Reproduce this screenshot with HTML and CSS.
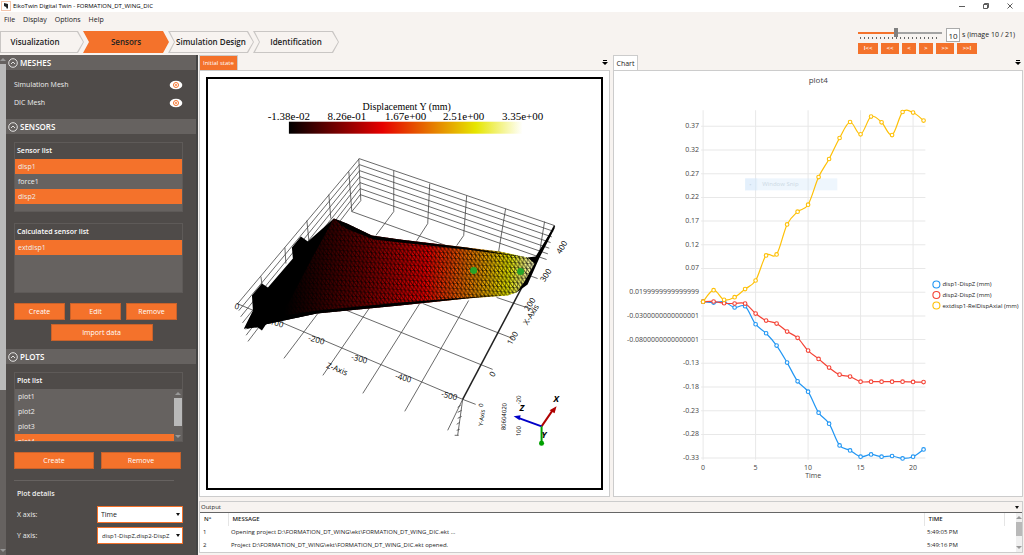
FILE: index.html
```html
<!doctype html>
<html lang="en">
<head>
    <meta charset="utf-8" />
    <title>EikoTwin Digital Twin - FORMATION_DT_WING_DIC</title>
    <link rel="stylesheet" href="styles.css">
</head>
<body>
    <header class="titlebar">
        <svg class="logo" viewBox="0 0 10 10"><rect x=".5" y=".5" width="9" height="9" fill="#fff" stroke="#f3c4ab"/><path d="M3 2l4 1v4l-1 1-1-2-2-1z" fill="#222"/></svg>
        <span class="title">EikoTwin Digital Twin - FORMATION_DT_WING_DIC</span>
        <div class="window-buttons">
            <button aria-label="Minimize"><svg viewBox="0 0 8 8"><path d="M1 4.5h6"/></svg></button>
            <button aria-label="Restore"><svg viewBox="0 0 8 8"><path d="M1.5 2.5h4v4h-4zM2.5 2.5v-1h4v4h-1"/></svg></button>
            <button aria-label="Close"><svg viewBox="0 0 8 8"><path d="M1.500 1.500l5 5M6.500 1.500l-5 5"/></svg></button>
        </div>
    </header>

    <div class="toolbar">
        <div class="toolbar-left">
            <nav class="menu">
                <a href="#">File</a>
                <a href="#">Display</a>
                <a href="#">Options</a>
                <a href="#">Help</a>
            </nav>
            <nav class="steps">
                <a href="#" class="step first"><span>Visualization</span></a>
                <a href="#" class="step active"><span>Sensors</span></a>
                <a href="#" class="step"><span>Simulation Design</span></a>
                <a href="#" class="step"><span>Identification</span></a>
            </nav>
        </div>
        <div class="player">
            <div class="player-top">
                <div class="slider">
                    <input type="range" min="1" max="21" value="10" aria-label="Image">
                    <div class="ticks"></div>
                </div>
                <input class="frame" id="frame" type="text" value="10">
                <label for="frame">s (image 10 / 21)</label>
            </div>
            <div class="player-buttons">
                <button class="wide">I&lt;&lt;</button>
                <button class="mid">&lt;&lt;</button>
                <button>&lt;</button>
                <button>&gt;</button>
                <button class="mid">&gt;&gt;</button>
                <button class="wide">&gt;&gt;I</button>
            </div>
        </div>
    </div>

    <main>
        <aside class="sidebar">
            <div class="scrollbar"><i class="up"></i><b></b><i class="down"></i></div>
            <div class="sections">
                <button class="section-head"><svg viewBox="0 0 10 10"><circle cx="5" cy="5" r="4.300"/><path d="M3 6l2-2 2 2"/></svg>MESHES</button>
                <div class="meshes">
                    <div class="mesh-row">Simulation Mesh
                        <button aria-label="Show simulation mesh"><svg viewBox="0 0 14 10"><ellipse cx="7" cy="5" rx="6.300" ry="4.300" fill="#fff"/><circle cx="7" cy="5" r="2.500" fill="#fff" stroke="#f4722b"/><circle cx="7" cy="5" r=".9" fill="#f4722b"/></svg></button>
                    </div>
                    <div class="mesh-row">DIC Mesh
                        <button aria-label="Show DIC mesh"><svg viewBox="0 0 14 10"><ellipse cx="7" cy="5" rx="6.300" ry="4.300" fill="#fff"/><circle cx="7" cy="5" r="2.500" fill="#fff" stroke="#f4722b"/><circle cx="7" cy="5" r=".9" fill="#f4722b"/></svg></button>
                    </div>
                </div>

                <button class="section-head"><svg viewBox="0 0 10 10"><circle cx="5" cy="5" r="4.300"/><path d="M3 6l2-2 2 2"/></svg>SENSORS</button>
                <div class="section-body">
                    <div class="list">
                        <h3>Sensor list</h3>
                        <ul>
                            <li class="selected">disp1</li>
                            <li>force1</li>
                            <li class="selected">disp2</li>
                        </ul>
                    </div>
                    <div class="list">
                        <h3>Calculated sensor list</h3>
                        <ul>
                            <li class="selected">extdisp1</li>
                        </ul>
                    </div>
                    <div class="buttons three">
                        <button>Create</button>
                        <button>Edit</button>
                        <button>Remove</button>
                    </div>
                    <div class="buttons import">
                        <button>Import data</button>
                    </div>
                </div>

                <button class="section-head"><svg viewBox="0 0 10 10"><circle cx="5" cy="5" r="4.300"/><path d="M3 6l2-2 2 2"/></svg>PLOTS</button>
                <div class="section-body">
                    <div class="list">
                        <h3>Plot list</h3>
                        <div class="list-scroll">
                            <ul>
                                <li>plot1</li>
                                <li>plot2</li>
                                <li>plot3</li>
                                <li class="selected">plot4</li>
                            </ul>
                            <div class="scrollbar"><i class="up"></i><b></b><i class="down"></i></div>
                        </div>
                    </div>
                    <div class="buttons two">
                        <button>Create</button>
                        <button>Remove</button>
                    </div>
                    <hr>
                    <h3 class="details">Plot details</h3>
                    <div class="field">
                        <label for="xaxis">X axis:</label>
                        <div class="select"><select id="xaxis"><option>Time</option></select></div>
                    </div>
                    <div class="field">
                        <label for="yaxis">Y axis:</label>
                        <div class="select"><select id="yaxis" class="multi"><option>disp1-DispZ,disp2-DispZ</option></select></div>
                    </div>
                </div>
                <button class="section-head" aria-label="Next section"><svg viewBox="0 0 10 10"><circle cx="5" cy="5" r="4.300"/></svg></button>
            </div>
        </aside>

        <div class="content">
            <div class="panels">
                <section class="panel">
                    <div class="tabs"><button class="tab active">Initial state</button><button class="more" aria-label="Tabs"><svg viewBox="0 0 6 6"><path d="M1 0h4v1H1zM0 2h6L3 5z"/></svg></button></div>
                    <div class="panel-body view">
                        <svg class="scene" viewBox="208 79 393 408">
                            <defs>
                                <linearGradient id="heat">
                                    <stop offset="0" stop-color="#000"/>
                                    <stop offset=".4" stop-color="#e60000"/>
                                    <stop offset=".8" stop-color="#e6e600"/>
                                    <stop offset="1" stop-color="#fff"/>
                                </linearGradient>
                                <linearGradient id="wing" gradientUnits="userSpaceOnUse" x1="290" y1="260" x2="538" y2="285">
                                    <stop offset="0" stop-color="#000"/>
                                    <stop offset=".3" stop-color="#6a0000"/>
                                    <stop offset=".55" stop-color="#e60000"/>
                                    <stop offset=".72" stop-color="#e67300"/>
                                    <stop offset=".88" stop-color="#e6e600"/>
                                    <stop offset="1" stop-color="#fffff0"/>
                                </linearGradient>
                                <pattern id="mesh" width="4" height="5" patternUnits="userSpaceOnUse" patternTransform="rotate(4)">
                                    <path d="M0 0H4M0 0V5M0 0L4 5" stroke="#000" stroke-width=".9" fill="none"/>
                                </pattern>
                            </defs>
                            <g id="grid" class="grid"></g>
                            <path fill="url(#wing)" d="M334 218L347 223L372 235L400 239L467 247L500 251L528 257L538 257L525 283L517 292L508 295L467 298L400 305L317 313L265 324L262 300Z"/>
                            <path fill="url(#mesh)" d="M334 218L347 223L372 235L400 239L467 247L500 251L528 257L538 257L525 283L517 292L508 295L467 298L400 305L317 313L265 324L262 300Z"/>
                            <path d="M334 218L308 241L301 236L292 247L293 258L268 287L262 283L252 295L253 310L244 328L258 327L262 330L266 324L290 300L312 258Z"/>
                            <path d="M334 218L347 223L372 235L400 239L467 247L528 257L467 249L400 242L374 239L346 228ZM245 329L265 318L317 310L400 302L467 297L508 294L467 298L400 305L317 313L265 324Z"/>
                            <path d="M555 225L536 256L528 257L535 263L525 281L517 292L528 284L540 257L555 228Z"/>
                            <circle cx="474" cy="270" r="3.500" fill="#28a428"/>
                            <circle cx="521" cy="271" r="3.500" fill="#28a428"/>
                            <g class="axis-labels">
                                <text x="234" y="308" transform="rotate(15 234 308)">0</text>
                                <text x="267" y="323" transform="rotate(15 267 323)">-100</text>
                                <text x="308" y="340" transform="rotate(15 308 340)">-200</text>
                                <text x="351" y="359" transform="rotate(15 351 359)">-300</text>
                                <text x="395" y="378" transform="rotate(15 395 378)">-400</text>
                                <text x="441" y="396" transform="rotate(15 441 396)">-500</text>
                                <text x="326" y="367" transform="rotate(22 326 367)">Z-Axis</text>
                                <text x="528" y="325" transform="rotate(-58 528 325)">X-Axis</text>
                                <text x="494" y="377" transform="rotate(-60 494 377)">0</text>
                                <text x="512" y="345" transform="rotate(-60 512 345)">100</text>
                                <text x="529" y="311" transform="rotate(-58 529 311)">200</text>
                                <text x="545" y="282" transform="rotate(-58 545 282)">300</text>
                                <text x="561" y="254" transform="rotate(-58 561 254)">400</text>
                                <g class="small">
                                    <text x="483" y="407" transform="rotate(-80 483 407)">0</text>
                                    <text x="483" y="426" transform="rotate(-82 483 426)">Y-Axis</text>
                                    <text x="506" y="430" transform="rotate(-88 506 430)">80604020</text>
                                    <text x="521" y="404" transform="rotate(-88 521 404)">-20</text>
                                    <text x="521" y="436" transform="rotate(-88 521 436)">100</text>
                                </g>
                            </g>
                            <g class="triad">
                                <path d="M542 426L553 410" stroke="#b00000"/><path d="M557 406L555 413L550 410Z" fill="#b00000"/>
                                <path d="M542 426L520 418" stroke="#0000c8"/><path d="M514 416L521 415L520 420Z" fill="#0000c8"/>
                                <path d="M542 426V442" stroke="#00a000"/><circle cx="542" cy="443" r="2.500" fill="#00a000"/>
                                <text x="554" y="402">X</text>
                                <text x="520" y="411">Z</text>
                                <text x="542" y="438">Y</text>
                            </g>
                            <g class="legend-text">
                                <text class="legend-title" x="407" y="109">Displacement Y (mm)</text>
                                <text x="289" y="119">-1.38e-02</text>
                                <text x="347" y="119">8.26e-01</text>
                                <text x="406" y="119">1.67e+00</text>
                                <text x="464" y="119">2.51e+00</text>
                                <text x="523" y="119">3.35e+00</text>
                            </g>
                            <rect x="289" y="121" width="234" height="12" fill="url(#heat)"/>
                        </svg>
                    </div>
                </section>

                <section class="panel">
                    <div class="tabs"><button class="tab">Chart</button><button class="more" aria-label="Tabs"><svg viewBox="0 0 6 6"><path d="M1 0h4v1H1zM0 2h6L3 5z"/></svg></button></div>
                    <div class="panel-body">
                        <svg id="chart" class="chart" viewBox="614 71 408 424">
                            <text class="chart-title" x="818" y="83">plot4</text>
                        </svg>
                    </div>
                </section>
            </div>

            <section class="output">
                <div class="output-head">Output<button aria-label="Output options"></button></div>
                <div class="output-body">
                    <table>
                        <thead>
                            <tr><th class="num">N°</th><th>MESSAGE</th><th class="time">TIME</th><th class="rest"></th></tr>
                        </thead>
                        <tbody>
                            <tr><td>1</td><td>Opening project D:\FORMATION_DT_WING\ekt\FORMATION_DT_WING_DIC.ekt ...</td><td>5:49:05 PM</td><td></td></tr>
                            <tr><td>2</td><td>Project D:\FORMATION_DT_WING\ekt\FORMATION_DT_WING_DIC.ekt opened.</td><td>5:49:16 PM</td><td></td></tr>
                        </tbody>
                    </table>
                    <div class="scrollbar light"><i class="up"></i><b></b><i class="down"></i></div>
                </div>
            </section>
        </div>
    </main>

    <script src="script.js"></script>
</body>
</html>
```
FILE: styles.css
```css
*{
    box-sizing:border-box;
}
body{
    margin:0;
    height:100vh;
    display:flex;
    flex-direction:column;
    overflow:hidden;
    background-color:#f7f3f0;
    color:#222;
    font:7px/10px "Open Sans","Noto Sans",sans-serif;
}
button,input,select{
    font:inherit;
    color:inherit;
    margin:0;
    padding:0;
    border:0;
    border-radius:0;
    background:none;
}
a{
    color:inherit;
    text-decoration:none;
}
h3,ul{
    margin:0;
    padding:0;
    list-style:none;
    font-size:7px;
}

/* title bar */
.titlebar{
    display:flex;
    align-items:center;
    height:12px;
    background-color:#fff;
}
.title{
    font-size:6px;
    color:#000;
}
.logo{
    width:10px;
    height:10px;
    margin:0 2px 0 1px;
}
.window-buttons{
    display:flex;
    gap:16px;
    margin-left:auto;
    padding-right:10px;
}
.window-buttons button{
    width:8px;
    height:8px;
    display:flex;
}
.window-buttons svg{
    width:8px;
    height:8px;
    fill:none;
    stroke:#333;
    stroke-width:.8;
}

/* toolbar */
.toolbar{
    display:flex;
    justify-content:space-between;
    height:43px;
}
.menu{
    display:flex;
    gap:8px;
    padding:3px 4px 6px;
}
.steps{
    display:flex;
}
.step{
    width:86px;
    height:22px;
    margin-right:-1px;
    padding:1px;
    background-color:#c9c6c4;
    font-size:8px;
    font-weight:600;
    clip-path:polygon(0 0,80px 0,100% 50%,80px 100%,0 100%,6px 50%);
}
.step span{
    display:flex;
    align-items:center;
    justify-content:center;
    height:20px;
    white-space:nowrap;
    background-color:#f7f3f0;
    clip-path:polygon(1px 0,78px 0,100% 50%,78px 100%,1px 100%,6px 50%);
}
.step.first{
    width:84px;
    clip-path:polygon(0 0,78px 0,100% 50%,78px 100%,0 100%);
}
.step.first span{
    padding-right:14px;
    clip-path:polygon(0 0,76px 0,100% 50%,76px 100%,0 100%);
}
.step.active,.step.active span{
    background-color:#f4722b;
}

/* player */
.player{
    width:166px;
    padding-top:16px;
}
.player-top{
    display:flex;
    height:14px;
    margin-bottom:1px;
}
.slider{
    width:84px;
    margin-right:4px;
}
.slider input{
    display:block;
    width:84px;
    height:9px;
    appearance:none;
    background:linear-gradient(90deg,#f4722b 44%,#a3a3a3 44%) center/100% 2px no-repeat;
}
.slider input::-webkit-slider-thumb{
    appearance:none;
    width:4px;
    height:9px;
    background-color:#808080;
}
.ticks{
    height:2px;
    margin:0 2px;
    background:repeating-linear-gradient(90deg,#666 0 1px,transparent 1px 4px);
}
.frame{
    width:14px;
    height:14px;
    margin-right:2px;
    border:1px solid #aaa;
    background-color:#fff;
    font-size:8px;
    line-height:12px;
    text-align:center;
}
.player-top label{
    line-height:14px;
    white-space:nowrap;
}
.player-buttons{
    display:flex;
    gap:3px;
}
.player-buttons button{
    width:14px;
    height:11px;
    background-color:#f4722b;
    color:#fff;
    font-size:6px;
    line-height:11px;
    font-weight:600;
}
.player-buttons .mid{
    width:18px;
}
.player-buttons .wide{
    width:20px;
}

main{
    flex:1;
    min-height:0;
    display:flex;
}

/* scroll bars */
.scrollbar{
    display:flex;
    flex-direction:column;
    align-items:center;
    gap:3px;
    width:6px;
    padding:3px 0;
    background-color:#666260;
}
.scrollbar i{
    border:3px solid transparent;
    border-top:0;
    border-bottom:3px solid #999;
}
.scrollbar .down{
    border-top:3px solid #999;
    border-bottom:0;
    margin-top:auto;
}
.scrollbar b{
    width:100%;
    background-color:#b9b9b9;
}
.light.scrollbar{
    background-color:#f0f0f0;
}

/* sidebar */
.sidebar{
    display:flex;
    width:198px;
    overflow:hidden;
    background-color:#4f4b49;
    border-right:2px solid #444;
    color:#eee;
}
.sidebar > .scrollbar b{
    height:66%;
}
.sections{
    flex:1;
}
.section-head{
    display:flex;
    align-items:center;
    gap:2px;
    width:100%;
    height:15px;
    padding-left:2px;
    background-color:#666260;
    color:#fff;
    font-size:8px;
    font-weight:600;
}
.section-head svg{
    width:10px;
    height:10px;
    fill:none;
    stroke:#fff;
    stroke-width:.8;
}
.meshes{
    padding:6px 13px 7px 8px;
}
.mesh-row{
    display:flex;
    align-items:center;
    justify-content:space-between;
    height:18px;
}
.mesh-row button{
    display:flex;
}
.mesh-row svg{
    width:14px;
    height:10px;
}
.section-body{
    padding:8px 13px 8px 8px;
}
.list{
    height:70px;
    margin-bottom:11px;
    border:1px solid #5e5a58;
    overflow:hidden;
    display:flex;
    flex-direction:column;
}
.list h3{
    padding:3px 2px;
    line-height:10px;
    font-weight:600;
    color:#fff;
}
.list ul{
    flex:1;
    background-color:#666260;
}
.list li{
    height:15px;
    padding-left:3px;
    line-height:15px;
}
.list .selected{
    background-color:#f4722b;
}
.list-scroll{
    flex:1;
    min-height:0;
    display:flex;
}
.list-scroll .scrollbar{
    width:8px;
}
.list-scroll .scrollbar b{
    height:28px;
}
.buttons{
    display:flex;
    gap:5px;
    margin-top:-1px;
}
.buttons button{
    height:17px;
    background-color:#f4722b;
    border:1px solid #c9622b;
    color:#fff;
}
.three button{
    width:51px;
}
.import{
    justify-content:center;
    margin-top:4px;
    padding-left:6px;
}
.import button{
    width:102px;
}
.two{
    gap:7px;
}
.two button{
    width:80px;
}
hr{
    width:160px;
    margin:11px 0 8px;
    border:0;
    border-top:1px solid #666260;
}
.details{
    padding-left:3px;
    margin-bottom:7px;
    font-weight:600;
}
.field{
    display:flex;
    justify-content:space-between;
    align-items:center;
    margin-bottom:4px;
    padding-left:3px;
}
.select{
    position:relative;
    width:86px;
}
.select select{
    display:block;
    width:100%;
    height:17px;
    padding:0 3px;
    appearance:none;
    border:1px solid #f4722b;
    background-color:#fff;
    color:#222;
}
.select .multi{
    padding:0 0 0 4px;
    font-size:6px;
}
.select::after{
    content:"";
    position:absolute;
    right:3px;
    top:7px;
    border:2px solid transparent;
    border-top:3px solid #111;
    border-bottom:0;
    pointer-events:none;
}

/* panels */
.content{
    flex:1;
    min-width:0;
    display:flex;
    flex-direction:column;
    gap:4px;
    padding:0 1px 2px;
}
.panels{
    flex:1;
    min-height:0;
    display:grid;
    grid-template-columns:1fr 1fr;
    gap:3px;
}
.panel{
    display:flex;
    flex-direction:column;
    min-height:0;
}
.tabs{
    display:flex;
    justify-content:space-between;
    height:15px;
}
.tab{
    height:16px;
    padding:0 3px;
    border:1px solid #ccc;
    border-bottom:0;
    background-color:#fff;
}
.tab.active{
    height:15px;
    background-color:#f4722b;
    color:#fff;
    font-size:6px;
}
.more{
    display:flex;
    align-items:center;
    margin-right:2px;
}
.more svg{
    width:6px;
    height:6px;
}
.panel-body{
    flex:1;
    min-height:0;
    display:flex;
    border:1px solid #ccc;
    background-color:#fff;
}
.view{
    padding:6px;
}
.scene{
    flex:1;
    min-width:0;
    border:2px solid #000;
}
.chart{
    flex:1;
    min-width:0;
}
.grid{
    fill:none;
    stroke:#444;
    stroke-width:.8;
}
.grid .axis{
    stroke:#222;
    stroke-width:1.5;
}
.axis-labels{
    font:8px "Open Sans",sans-serif;
}
.axis-labels .small{
    font-size:6px;
}
.triad{
    font:italic bold 9px "Open Sans",sans-serif;
    stroke-width:2;
}
.legend-text{
    font:11px "Liberation Serif",serif;
    text-anchor:middle;
}
.legend-title{
    font-size:10px;
}

/* chart */
.chart text{
    font-size:7px;
    fill:#444;
}
.chart .chart-title{
    font-size:8px;
    text-anchor:middle;
}
.chart .ylabel{
    text-anchor:end;
}
.chart .xlabel{
    text-anchor:middle;
}
.chart .legend{
    font-size:6px;
    fill:#222;
}
.chart .gridline{
    stroke:#e8e8e8;
}
.chart .line{
    fill:none;
    stroke-width:1.2;
}
.chart circle{
    fill:#fff;
    stroke-width:1.1;
}
.chart .snip{
    fill:#d5e9fa;
    opacity:.4;
}
.chart .snip-text{
    fill:#ccd9e4;
    font-size:6px;
}

/* output */
.output{
    border:1px solid #ccc;
    background-color:#fff;
}
.output-head{
    display:flex;
    align-items:center;
    justify-content:space-between;
    height:11px;
    padding:0 3px 0 1px;
    background-color:#f7f3f0;
    border-bottom:1px solid #666;
    font-size:6px;
}
.output-head button{
    border:2px solid transparent;
    border-top:3px solid #111;
    border-bottom:0;
}
.output-body{
    display:flex;
}
.output table{
    flex:1;
    border-collapse:collapse;
    table-layout:fixed;
    font-size:6px;
}
.output th,.output td{
    height:13px;
    padding:0 3px;
    line-height:13px;
    text-align:left;
}
.output th{
    padding:0 4px;
    font-weight:600;
    border-right:1px solid #e5e5e5;
}
.output .num{
    width:28px;
}
.output .time{
    width:80px;
}
.output .rest{
    width:12px;
    border:0;
}
.light.scrollbar b{
    height:14px;
}
```
FILE: script.js
```js
var NS = 'http://www.w3.org/2000/svg';

function add(parent, name, attrs, text){
    var el = document.createElementNS(NS, name);
    for( var key in attrs ){
        el.setAttribute(key, attrs[key]);
    }
    if(text) el.textContent = text;
    parent.appendChild(el);
    return el;
}

// ---- 3D view: walls and floor of the axes box ----
var grid = document.getElementById('grid');
for( var i = 0; i < 7; i++ ){
    var k = i / 6;
    var cx = 359.5 + k, cy = 158 + 36 * k;
    add(grid, 'path', {d: 'M' + (237 + 11 * k) + ' ' + (304 + 37 * k) + 'L' + cx + ' ' + cy + 'L' + (555 - 8 * k) + ' ' + (225 + 34 * k)});
}
[
    'M359 158L361 200L352 211L538 278',
    'M349 171L352 211', 'M329 194L331 218', 'M307 220L309 240', 'M285 247L286 263', 'M261 276L262 284',
    'M394 170V211L376 235', 'M430 183L428 223L417 240', 'M467 195L464 235L457 245', 'M506 208L499 251', 'M545 221L540 252',
    'M347 310L493 369', 'M423 303L513 338', 'M497 297L533 309',
    'M318 313L284 358', 'M370 307L323 375', 'M420 303L363 393', 'M469 300L405 411', 'M463 399L448 430',
    'M463 399L458 435M461 405L458 407M462 410l-4 2M462 416l-4 2M460 422l-3 2M460 429l-3 1M459 435h-4'
].forEach(function(d){
    add(grid, 'path', {d: d});
});
add(grid, 'path', {d: 'M237 303L463 399L476 404'});
add(grid, 'path', {d: 'M463 399L555 225', 'class': 'axis'});

// ---- chart ----
var chart = document.getElementById('chart');
var series = [
    {name: 'disp1-DispZ (mm)', color: '#2196f3', data: [0,-.0018,-.0002,-.0123,-.0096,-.0476,-.0666,-.0926,-.1285,-.168,-.1898,-.2341,-.2574,-.3032,-.3138,-.3271,-.3222,-.3271,-.3256,-.3307,-.3271,-.3117]},
    {name: 'disp2-DispZ (mm)', color: '#f44336', data: [0,.0004,-.0033,-.0039,-.0039,-.025,-.0398,-.0461,-.063,-.0763,-.1032,-.1207,-.1391,-.1539,-.1581,-.1687,-.1687,-.1687,-.1687,-.1687,-.1694,-.1697]},
    {name: 'extdisp1-RelDispAxial (mm)', color: '#fec007', data: [0,.0242,.0039,.0094,.0267,.0447,.0975,.0996,.163,.1898,.2046,.2629,.301,.3453,.3791,.3531,.3905,.3784,.3516,.4002,.399,.382]}
];
var labels = ['0.37','0.32','0.27','0.22','0.17','0.12','0.07','0.0199999999999999','-0.0300000000000001','-0.0800000000000001','-0.13','-0.18','-0.23','-0.28','-0.33'];

function px(t){ return 703 + t * 10.485; }
function py(v){ return 126 + (0.37 - v) * 473.4; }

labels.forEach(function(label, n){
    var y = py(0.37 - n * 0.05);
    add(chart, 'path', {d: 'M701 ' + y + 'H925', 'class': 'gridline'});
    add(chart, 'text', {x: 699, y: y + 2, 'class': 'ylabel'}, label);
});
for( var t = 0; t <= 20; t += 5 ){
    add(chart, 'path', {d: 'M' + px(t) + ' 110V459', 'class': 'gridline'});
    add(chart, 'text', {x: px(t), y: 469, 'class': 'xlabel'}, String(t));
}
add(chart, 'text', {x: 813, y: 477, 'class': 'xlabel'}, 'Time');

add(chart, 'rect', {x: 745, y: 178, width: 92, height: 12, 'class': 'snip'});
add(chart, 'rect', {x: 745, y: 178, width: 12, height: 12, 'class': 'snip'});
add(chart, 'text', {x: 749, y: 187, 'class': 'snip-text'}, '•');
add(chart, 'text', {x: 762, y: 186, 'class': 'snip-text'}, 'Window Snip');

series.forEach(function(s, n){
    var p = s.data.map(function(v, t){ return [px(t), py(v)]; });
    var d = 'M' + p[0];
    for( var i = 0; i < p.length - 1; i++ ){
        var a = p[i - 1] || p[i], b = p[i], c = p[i + 1], e = p[i + 2] || c;
        d += 'C' + [b[0] + (c[0] - a[0]) / 6, b[1] + (c[1] - a[1]) / 6, c[0] - (e[0] - b[0]) / 6, c[1] - (e[1] - b[1]) / 6, c[0], c[1]];
    }
    add(chart, 'path', {d: d, stroke: s.color, 'class': 'line'});
    p.forEach(function(q){
        add(chart, 'circle', {cx: q[0], cy: q[1], r: 1.8, stroke: s.color});
    });
    add(chart, 'circle', {cx: 936, cy: 284 + n * 10.5, r: 3.5, stroke: s.color});
    add(chart, 'text', {x: 942, y: 286 + n * 10.5, 'class': 'legend'}, s.name);
});
```
